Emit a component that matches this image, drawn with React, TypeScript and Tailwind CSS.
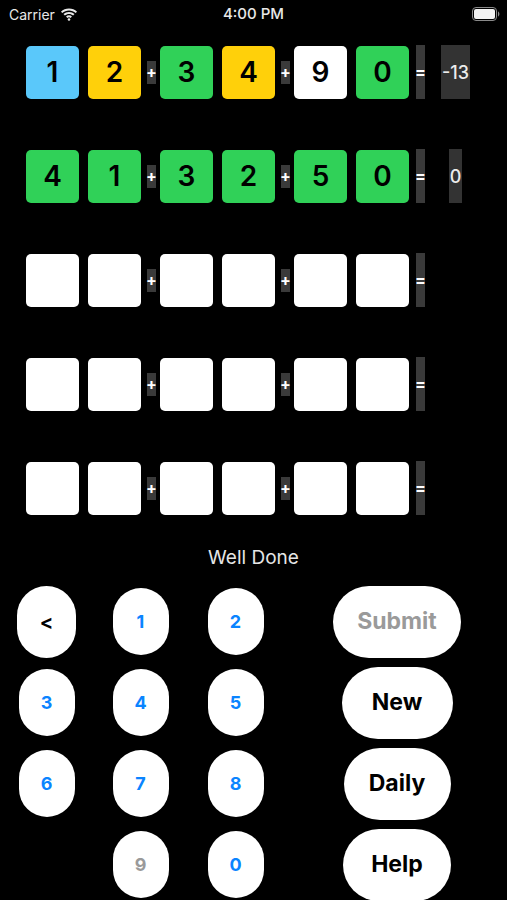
import React from 'react';

type Tile = { v: string; c: 'blue' | 'yellow' | 'green' | 'white' };

const tileColors: Record<Tile['c'], string> = {
  blue: 'bg-[#5ac8fa]',
  yellow: 'bg-[#ffd00a]',
  green: 'bg-[#30d158]',
  white: 'bg-white',
};

const rows: { tiles: Tile[]; result?: string }[] = [
  {
    tiles: [
      { v: '1', c: 'blue' },
      { v: '2', c: 'yellow' },
      { v: '3', c: 'green' },
      { v: '4', c: 'yellow' },
      { v: '9', c: 'white' },
      { v: '0', c: 'green' },
    ],
    result: '-13',
  },
  {
    tiles: ['4', '1', '3', '2', '5', '0'].map((v) => ({ v, c: 'green' as const })),
    result: '0',
  },
  { tiles: Array.from({ length: 6 }, () => ({ v: '', c: 'white' as const })) },
  { tiles: Array.from({ length: 6 }, () => ({ v: '', c: 'white' as const })) },
  { tiles: Array.from({ length: 6 }, () => ({ v: '', c: 'white' as const })) },
];

const TileBox: React.FC<{ tile: Tile; className?: string }> = ({ tile, className = '' }) => (
  <div
    className={`w-[53px] h-[53px] rounded-[5px] flex items-center justify-center text-[28px] font-semibold text-black ${tileColors[tile.c]} ${className}`}
  >
    {tile.v}
  </div>
);

const Op: React.FC<{ sign: string; className?: string }> = ({ sign, className = '' }) => (
  <div className={`w-[9px] bg-[#3a3a3a] text-white text-[16px] font-bold flex items-center justify-center ${className}`}>
    {sign}
  </div>
);

const keys = [
  { k: '<', color: 'text-black', big: true },
  { k: '1', color: 'text-[#0a84ff]' },
  { k: '2', color: 'text-[#0a84ff]' },
  { k: '3', color: 'text-[#0a84ff]' },
  { k: '4', color: 'text-[#0a84ff]' },
  { k: '5', color: 'text-[#0a84ff]' },
  { k: '6', color: 'text-[#0a84ff]' },
  { k: '7', color: 'text-[#0a84ff]' },
  { k: '8', color: 'text-[#0a84ff]' },
  null,
  { k: '9', color: 'text-[#9a9a9a]' },
  { k: '0', color: 'text-[#0a84ff]' },
];

const actions = [
  { label: 'Submit', w: 'w-[128px]', color: 'text-[#9a9a9a]' },
  { label: 'New', w: 'w-[111px]', color: 'text-black' },
  { label: 'Daily', w: 'w-[107px]', color: 'text-black' },
  { label: 'Help', w: 'w-[108px]', color: 'text-black' },
];

export default function App() {
  return (
    <div className="w-[507px] h-[900px] bg-black overflow-hidden text-white" style={{ fontFamily: 'Inter, "Noto Sans", sans-serif' }}>
      {/* status bar */}
      <div className="h-[28px] flex items-center justify-between px-[9px] relative">
        <div className="flex items-center gap-[5px] text-[14px] text-[#e8e8e8]">
          <span>Carrier</span>
          <svg width="18" height="13" viewBox="0 0 17 12">
            <path d="M8.5 2.2c2.4 0 4.6.9 6.3 2.5l1.3-1.4C14.1 1.4 11.4.3 8.5.3S2.9 1.4.9 3.3l1.3 1.4C3.9 3.1 6.1 2.2 8.5 2.2z" fill="#e8e8e8" />
            <path d="M8.5 5.5c1.5 0 2.8.5 3.9 1.5l1.3-1.4C12.3 4.3 10.5 3.6 8.5 3.6S4.7 4.3 3.3 5.6L4.6 7c1.1-1 2.4-1.5 3.9-1.5z" fill="#e8e8e8" />
            <path d="M8.5 8.7c.6 0 1.1.2 1.5.6l1.3-1.4c-.8-.7-1.8-1.1-2.8-1.1s-2 .4-2.8 1.1L7 9.3c.4-.4.9-.6 1.5-.6z" fill="#e8e8e8" />
            <circle cx="8.5" cy="10.8" r="1.2" fill="#e8e8e8" />
          </svg>
        </div>
        <div className="absolute left-0 right-0 text-center text-[15px] font-medium text-[#e8e8e8] pointer-events-none">4:00 PM</div>
        <svg width="28" height="14" viewBox="0 0 28 14" className="mr-[-2px]">
          <rect x="0.5" y="0.5" width="24" height="13" rx="3.5" fill="none" stroke="#8a8a8a" />
          <rect x="2" y="2" width="21" height="10" rx="2" fill="#f2f2f2" />
          <path d="M26 4.5v5c.8-.3 1.4-1.4 1.4-2.5s-.6-2.2-1.4-2.5z" fill="#8a8a8a" />
        </svg>
      </div>

      {/* equation rows */}
      <div className="flex flex-col gap-[50px] mt-[17px]">
        {rows.map((row, i) => (
          <div key={i} className="flex items-stretch h-[54px] pl-[26px]">
            <div className="flex items-center">
              <TileBox tile={row.tiles[0]} />
              <TileBox tile={row.tiles[1]} className="ml-[9px]" />
              <Op sign="+" className="h-[23px] ml-[6px] mr-[4px]" />
              <TileBox tile={row.tiles[2]} />
              <TileBox tile={row.tiles[3]} className="ml-[9px]" />
              <Op sign="+" className="h-[23px] ml-[6px] mr-[4px]" />
              <TileBox tile={row.tiles[4]} />
              <TileBox tile={row.tiles[5]} className="ml-[9px]" />
            </div>
            <Op sign="=" className="ml-[7px]" />
            <div className="w-[61px] flex justify-center">
              {row.result && (
                <div className="bg-[#333333] text-[#ececec] text-[18px] font-medium flex items-center justify-center px-[1px] min-w-[13px]">
                  {row.result}
                </div>
              )}
            </div>
          </div>
        ))}
      </div>

      <div className="mt-[32px] h-[22px] text-center text-[19px] text-[#e6e6e6] leading-[22px]">Well Done</div>

      {/* keypad */}
      <div className="flex mt-[12px]">
        <div className="grid grid-cols-[93px_95px_95px] auto-rows-[81px]">
          {keys.map((key, i) =>
            key ? (
              <div key={i} className="flex items-center justify-center">
                <div
                  className={`bg-white rounded-full flex items-center justify-center font-bold ${key.color} ${
                    key.big ? 'w-[59px] h-[72px] text-[20px]' : 'w-[56px] h-[67px] text-[18px]'
                  }`}
                >
                  {key.k}
                </div>
              </div>
            ) : (
              <div key={i} />
            )
          )}
        </div>
        <div className="flex-1 pl-[4px] grid auto-rows-[81px]">
          {actions.map((a) => (
            <div key={a.label} className="flex items-center justify-center">
              <div className={`${a.w} h-[72px] bg-white rounded-full flex items-center justify-center text-[23px] font-bold ${a.color}`}>
                {a.label}
              </div>
            </div>
          ))}
        </div>
      </div>
    </div>
  );
}
